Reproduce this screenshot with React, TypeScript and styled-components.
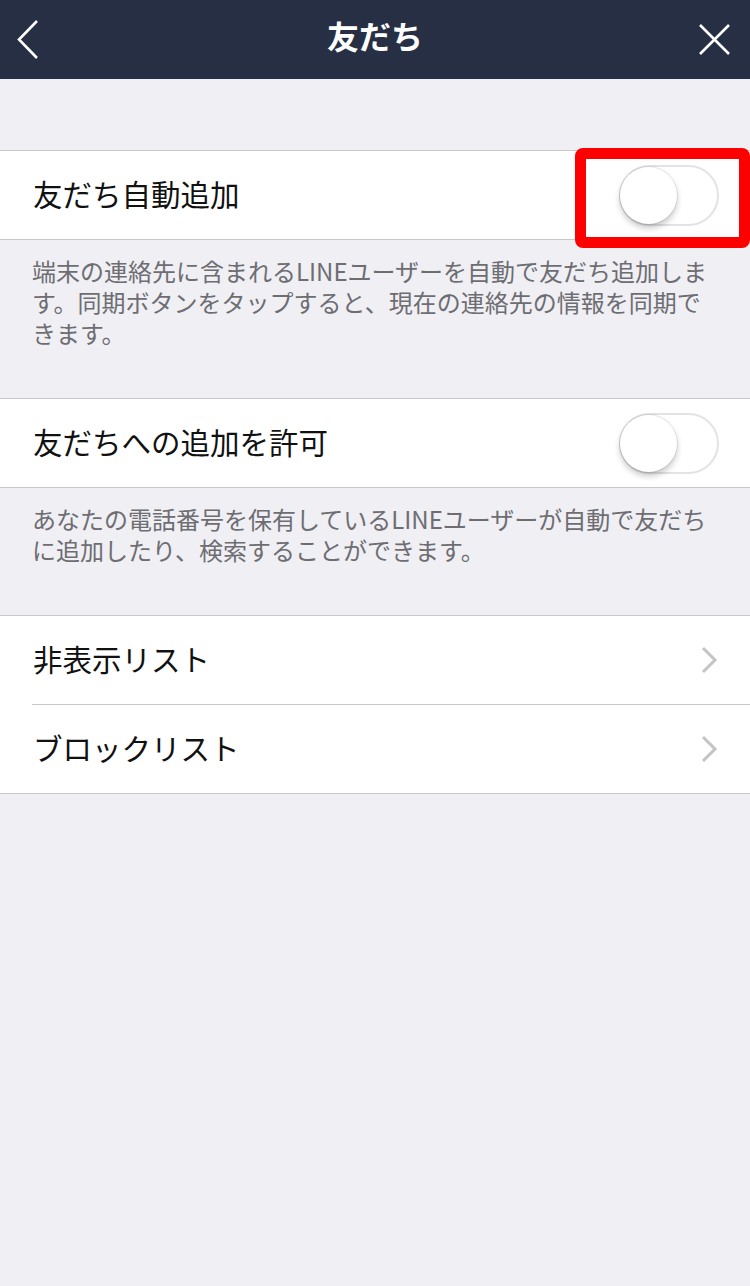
import styled, { createGlobalStyle } from "styled-components"

const GlobalStyle = createGlobalStyle`
    html, body {
        margin: 0;
        padding: 0;
        background: #efeff4;
    }
    body {
        font-family: "Noto Sans CJK JP", "Noto Sans", sans-serif;
        -webkit-font-smoothing: antialiased;
    }
`

const Page = styled.div`
    width: 750px;
    min-height: 1286px;
    background: #efeff4;
`

const Header = styled.header`
    height: 79px;
    background: #262f44;
    display: grid;
    grid-template-columns: 80px 1fr 80px;
    align-items: center;
`

const HeaderButton = styled.div<{ $align: "start" | "end" }>`
    display: flex;
    justify-content: ${(p) => (p.$align === "start" ? "flex-start" : "flex-end")};
    padding: ${(p) => (p.$align === "start" ? "0 0 0 16px" : "0 19px 0 0")};
    align-items: center;
`

const Title = styled.h1`
    margin: 0;
    padding-bottom: 9px;
    text-align: center;
    color: #ffffff;
    font-size: 32px;
    line-height: 40px;
    font-weight: 700;
`

const Content = styled.main`
    padding-top: 71px;
`

const Group = styled.section`
    background: #ffffff;
    border-top: 1px solid #c8c7cc;
    border-bottom: 1px solid #c8c7cc;
`

const Row = styled.div<{ $divider?: boolean }>`
    position: relative;
    height: 88px;
    display: flex;
    align-items: center;
    justify-content: space-between;
    padding: 0 32px 0 33px;
    ${(p) =>
        p.$divider &&
        `
        &::after {
            content: "";
            position: absolute;
            left: 32px;
            right: 0;
            bottom: -1px;
            height: 1px;
            background: #c8c7cc;
        }
    `}
    & + & {
        margin-top: 1px;
    }
`

const Label = styled.span`
    font-size: 29.5px;
    line-height: 36px;
    padding-bottom: 5px;
    color: #111111;
    font-weight: 400;
`

const Note = styled.p`
    margin: 0;
    padding: 15px 32px 50px 32px;
    font-size: 24px;
    line-height: 31px;
    color: #6d6d72;
`

const ToggleTrack = styled.div`
    position: relative;
    width: 100px;
    height: 61px;
    box-sizing: border-box;
    border-radius: 31px;
    border: 2px solid #e3e3e6;
    background: #ffffff;
    margin-right: -1px;
`

const ToggleKnob = styled.div`
    position: absolute;
    top: 0;
    left: -1px;
    width: 57px;
    height: 57px;
    border-radius: 50%;
    background: #ffffff;
    box-shadow: 0 0 0 1px rgba(0, 0, 0, 0.08), 0 4px 6px rgba(0, 0, 0, 0.22);
`

const Highlight = styled.div`
    position: absolute;
    left: 575px;
    top: 148px;
    width: 175px;
    height: 100px;
    box-sizing: border-box;
    border: 11px solid #ff0000;
    border-radius: 8px;
    pointer-events: none;
`

const Screen = styled.div`
    position: relative;
`

function Toggle() {
    return (
        <ToggleTrack>
            <ToggleKnob />
        </ToggleTrack>
    )
}

function Chevron() {
    return (
        <svg width="18" height="28" viewBox="0 0 18 28">
            <path d="M3 2 L15 14 L3 26" fill="none" stroke="#c4c4c8" strokeWidth="3" />
        </svg>
    )
}

export default function App() {
    return (
        <Screen>
            <GlobalStyle />
            <Page>
                <Header>
                    <HeaderButton $align="start">
                        <svg width="24" height="40" viewBox="0 0 24 40">
                            <path d="M21 1 L3 19.5 L21 38" fill="none" stroke="#ffffff" strokeWidth="2.6" />
                        </svg>
                    </HeaderButton>
                    <Title>友だち</Title>
                    <HeaderButton $align="end">
                        <svg width="33" height="33" viewBox="0 0 33 33">
                            <path d="M2 2 L31 31 M31 2 L2 31" fill="none" stroke="#ffffff" strokeWidth="2.6" />
                        </svg>
                    </HeaderButton>
                </Header>

                <Content>
                    <Group>
                        <Row>
                            <Label>友だち自動追加</Label>
                            <Toggle />
                        </Row>
                    </Group>
                    <Note>
                        端末の連絡先に含まれるLINEユーザーを自動で友だち追加します。同期ボタンをタップすると、現在の連絡先の情報を同期できます。
                    </Note>

                    <Group>
                        <Row>
                            <Label>友だちへの追加を許可</Label>
                            <Toggle />
                        </Row>
                    </Group>
                    <Note>
                        あなたの電話番号を保有しているLINEユーザーが自動で友だちに追加したり、検索することができます。
                    </Note>

                    <Group>
                        <Row $divider>
                            <Label>非表示リスト</Label>
                            <Chevron />
                        </Row>
                        <Row>
                            <Label>ブロックリスト</Label>
                            <Chevron />
                        </Row>
                    </Group>
                </Content>
            </Page>
            <Highlight />
        </Screen>
    )
}
